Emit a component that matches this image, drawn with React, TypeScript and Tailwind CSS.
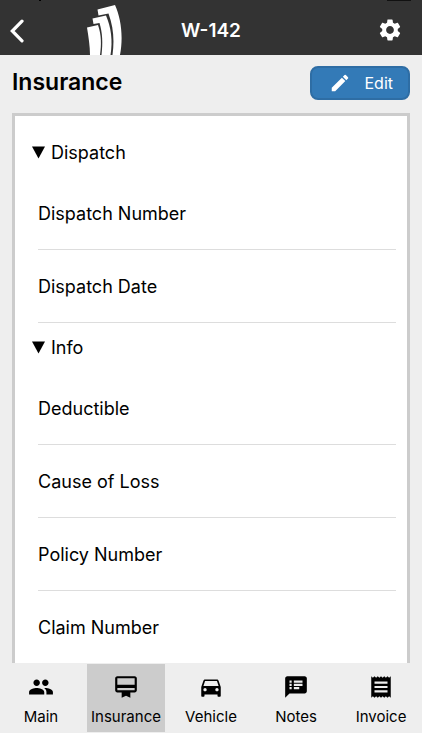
import {
  MdDirectionsCar,
  MdEdit,
  MdOutlineCardMembership,
  MdPeople,
  MdReceipt,
  MdSettings,
  MdSpeakerNotes,
} from 'react-icons/md';

const sections = [
  { title: 'Dispatch', fields: ['Dispatch Number', 'Dispatch Date'] },
  { title: 'Info', fields: ['Deductible', 'Cause of Loss', 'Policy Number', 'Claim Number'] },
];

const tabs = [
  { label: 'Main', icon: MdPeople },
  { label: 'Insurance', icon: MdOutlineCardMembership, active: true },
  { label: 'Vehicle', icon: MdDirectionsCar },
  { label: 'Notes', icon: MdSpeakerNotes },
  { label: 'Invoice', icon: MdReceipt },
];

function Logo() {
  return (
    <svg viewBox="0 0 36 50" className="h-[50px] w-9" fill="#fff" aria-hidden="true">
      <path d="M10.500 4.500 28 0C34 13 36.500 32 33 50H25.500C27.500 35 26.500 22 21.500 8.500L11.500 10.500Z" />
      <path d="M5.500 13.500 19 10.500C24 22 26 36 23.500 50H14.500C16 38 15.500 28 12.500 18L6.500 19Z" />
      <path d="M0 22.500 11 20C14.500 30 14.500 40 13 50H3C3 41 1.500 32 0 22.500Z" />
    </svg>
  );
}

function Header() {
  return (
    <header className="relative grid h-[55px] shrink-0 grid-cols-[1fr_auto_1fr] items-center bg-[#333] text-white">
      {/* Edge of the status bar */}
      <span className="absolute top-0 left-[39px] h-px w-[2px] bg-black" />
      <span className="absolute top-0 right-[11px] h-px w-6 bg-[#111]" />

      <div className="flex h-full items-center pl-[10px]">
        <button type="button" aria-label="Back" className="pt-[6px]">
          <svg viewBox="0 0 14 24" className="h-6 w-[14px]" fill="none" stroke="#fff" strokeWidth="3.2" strokeLinecap="round">
            <path d="M12 2.200 2.300 12 12 21.800" />
          </svg>
        </button>
        <span className="ml-[63px] self-end">
          <Logo />
        </span>
      </div>
      <h1 className="pt-[6px] text-[19px] leading-6 font-semibold">W-142</h1>
      <button type="button" aria-label="Settings" className="mr-[19px] justify-self-end pt-1">
        <MdSettings className="size-[26px]" />
      </button>
    </header>
  );
}

function Section({ title, fields }: { title: string; fields: string[] }) {
  return (
    <details open>
      <summary className="flex h-[49px] cursor-pointer list-none items-center gap-[6px]">
        <svg viewBox="0 0 13 13" className="size-[13px]" aria-hidden="true">
          <path d="M0 0.500H13L6.500 12.500Z" />
        </svg>
        {title}
      </summary>
      <ul className="pl-[6px]">
        {fields.map((field) => (
          <li key={field} className="flex h-[73px] items-center border-b border-[#ddd] pt-[2px]">
            {field}
          </li>
        ))}
      </ul>
    </details>
  );
}

export default function App() {
  return (
    <div className="flex h-dvh flex-col bg-white font-['Inter',sans-serif] text-black">
      <Header />

      <main className="flex min-h-0 flex-1 flex-col bg-[#eee] px-3">
        <div className="flex items-center justify-between pt-[11px] pb-[13px]">
          <h2 className="pb-[2px] text-[23px] leading-8 font-semibold">Insurance</h2>
          <button
            type="button"
            className="flex h-[34px] w-[100px] items-center justify-between rounded-lg border-2 border-[#2e6da4] bg-[#337ab7] pr-[15px] pl-[17px] text-base text-white"
          >
            <MdEdit className="size-[22px]" />
            Edit
          </button>
        </div>

        <div className="min-h-0 flex-1 overflow-y-auto border-3 border-b-0 border-[#ccc] bg-white pt-3 pr-[11px] pl-[17px] text-lg [scrollbar-width:none]">
          {sections.map((section) => (
            <Section key={section.title} {...section} />
          ))}
        </div>
      </main>

      <nav className="mb-[17px] grid shrink-0 grid-cols-5 gap-[7px] bg-[#eee] px-[2px] py-px">
        {tabs.map(({ label, icon: Icon, active }) => (
          <a
            key={label}
            href={`#${label.toLowerCase()}`}
            aria-current={active ? 'page' : undefined}
            className={`flex h-[68px] flex-col items-center gap-[7px] pt-[10px] text-[15px] leading-5 ${active ? 'bg-[#ccc]' : ''}`}
          >
            <Icon className="size-[26px]" />
            {label}
          </a>
        ))}
      </nav>
    </div>
  );
}
